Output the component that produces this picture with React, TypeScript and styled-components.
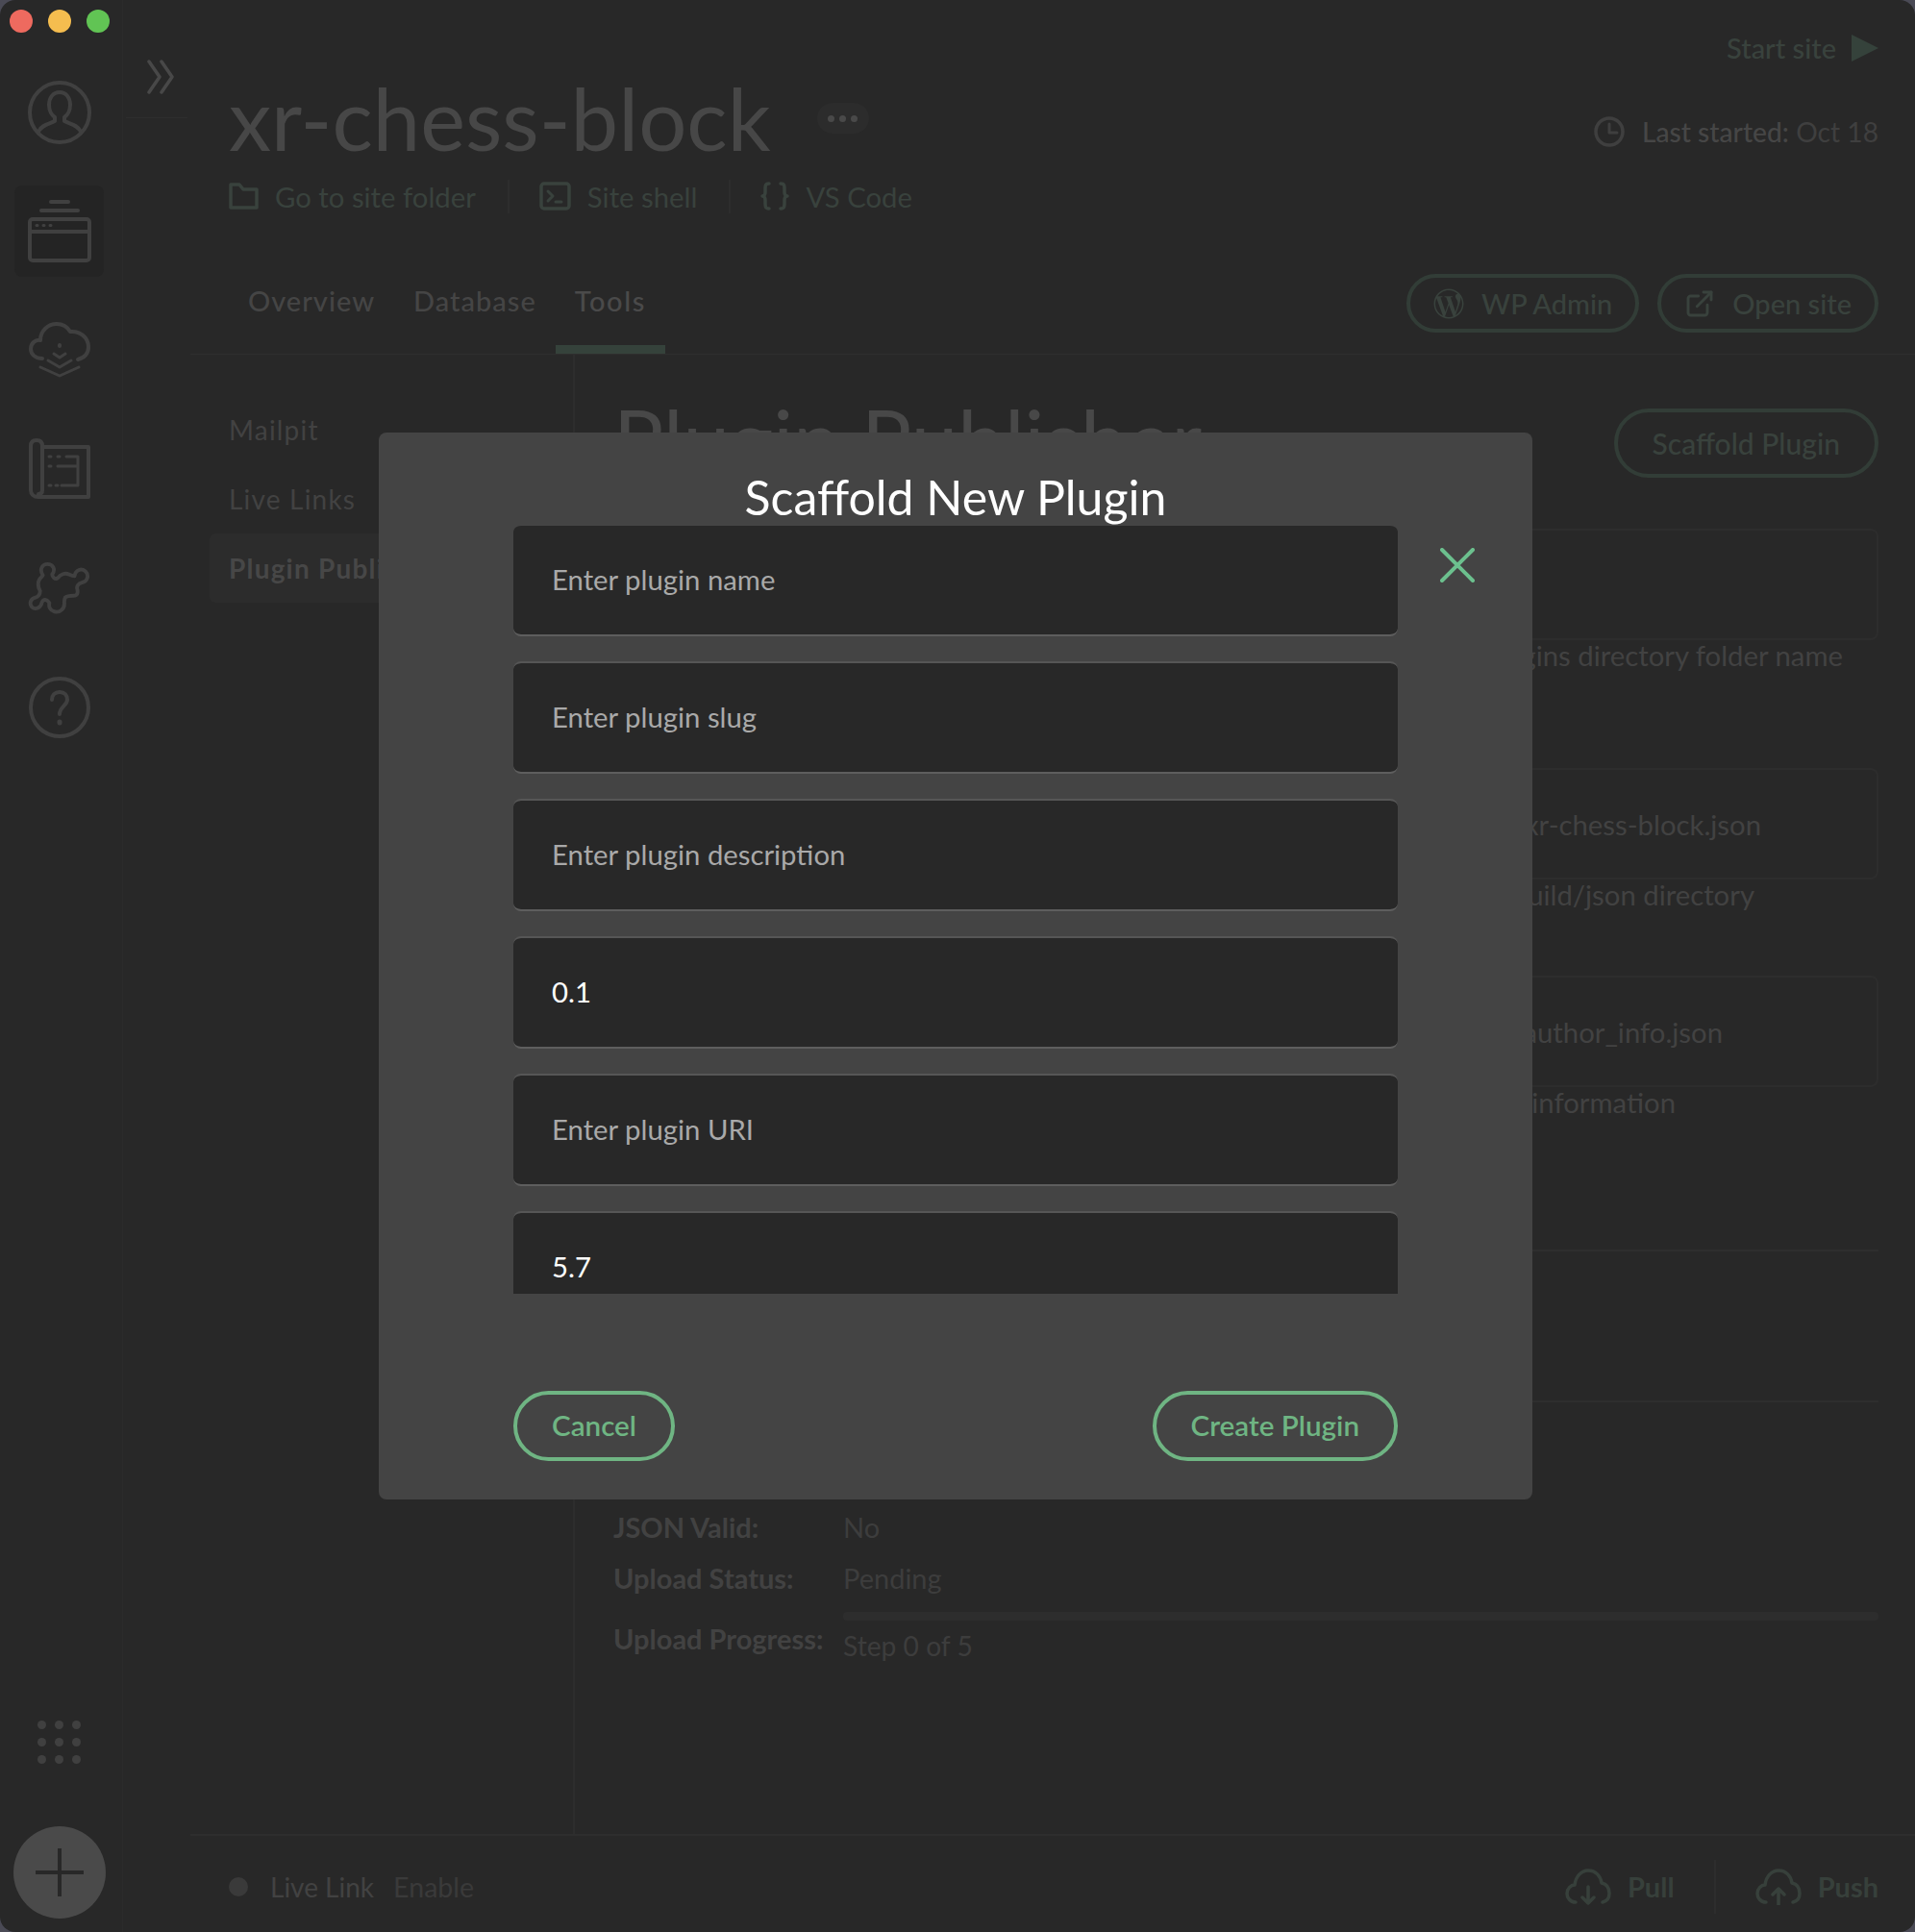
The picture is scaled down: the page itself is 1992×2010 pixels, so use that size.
import React from 'react';
import styled, { createGlobalStyle } from 'styled-components';
import { FaWordpressSimple } from 'react-icons/fa';
import { ExternalLink } from 'lucide-react';

const GlobalStyle = createGlobalStyle`
	html, body {
		margin: 0;
		padding: 0;
		background: #4a4a55;
	}
	* {
		box-sizing: border-box;
	}
	body {
		font-family: 'Lato', 'Open Sans', sans-serif;
	}
`;

const Window = styled.div`
	position: relative;
	display: flex;
	width: 1992px;
	height: 2010px;
	overflow: hidden;
	border-radius: 16px;
	background: #282828;
`;

const Sidebar = styled.nav`
	display: flex;
	flex-direction: column;
	align-items: center;
	width: 128px;
	padding: 10px 4px 0 0;
	border-right: 1px solid #2b2b2b;
`;

const TrafficLights = styled.div`
	display: flex;
	align-self: flex-start;
	gap: 16px;
	padding-left: 10px;
	margin-bottom: 35px;
`;

const Light = styled.span<{ $color: string }>`
	width: 24px;
	height: 24px;
	border-radius: 50%;
	background: ${(p) => p.$color};
`;

const SideIcon = styled.div<{ $active?: boolean }>`
	display: flex;
	align-items: center;
	justify-content: center;
	width: 93px;
	height: 95px;
	margin-bottom: ${(p) => (p.$active ? '28px' : '29px')};
	border-radius: 8px;
	background: ${(p) => (p.$active ? '#242424' : 'transparent')};
	color: #404040;
`;

const SideSpacer = styled.div`
	flex: 1;
`;

const DotGrid = styled.div`
	display: grid;
	grid-template-columns: repeat(3, 9px);
	gap: 9px;
	margin-bottom: 65px;
`;

const Dot = styled.span`
	width: 9px;
	height: 9px;
	border-radius: 50%;
	background: #404040;
`;

const AddButton = styled.div`
	display: flex;
	align-items: center;
	justify-content: center;
	width: 96px;
	height: 96px;
	margin-bottom: 14px;
	border-radius: 50%;
	background: #4a4a4a;
	color: #282828;
`;

const CollapseRail = styled.div`
	display: flex;
	flex-direction: column;
	align-items: center;
	width: 70px;
	padding-top: 62px;
	color: #484848;
`;

const Chevrons = styled.div`
	display: flex;
	margin-left: 8px;
`;

const RailRule = styled.div`
	width: 64px;
	height: 1px;
	margin-top: 24px;
	background: #2e2e2e;
`;

const SiteColumn = styled.div`
	display: flex;
	flex: 1;
	flex-direction: column;
	min-width: 0;
`;

const Header = styled.header`
	height: 369px;
	padding: 32px 38px 0 40px;
	border-bottom: 1px solid #2e2e2e;
`;

const HeaderTop = styled.div`
	display: flex;
	justify-content: space-between;
	height: 253px;
`;

const TitleBlock = styled.div`
	display: flex;
	flex-direction: column;
`;

const TitleRow = styled.div`
	display: flex;
	align-items: center;
	gap: 48px;
	height: 118px;
	margin-top: 32px;
`;

const SiteTitle = styled.h1`
	margin: 0;
	font-size: 88.6px;
	font-weight: 400;
	line-height: 1;
	color: #474747;
`;

const MorePill = styled.div`
	display: flex;
	align-items: center;
	justify-content: center;
	gap: 5px;
	width: 54px;
	height: 32px;
	border-radius: 16px;
	background: #2c2c2c;
`;

const MoreDot = styled.span`
	width: 7px;
	height: 7px;
	border-radius: 50%;
	background: #494949;
`;

const ActionRow = styled.div`
	display: flex;
	align-items: center;
	height: 40px;
	margin-top: 2px;
`;

const ActionLink = styled.a`
	display: flex;
	align-items: center;
	gap: 17px;
	padding-right: 33px;
	margin-right: 31px;
	border-right: 2px solid #2d2d2d;
	font-size: 29.3px;
	color: #39423d;

	&:last-child {
		border-right: 0;
	}
`;

const StatusBlock = styled.div`
	display: flex;
	flex-direction: column;
	align-items: flex-end;
	gap: 53px;
`;

const StartSite = styled.div`
	display: flex;
	align-items: center;
	gap: 16px;
	font-size: 29px;
	font-weight: 500;
	color: #39423d;
`;

const LastStarted = styled.div`
	display: flex;
	align-items: center;
	gap: 18px;
	font-size: 28.2px;
	color: #3f3f3f;

	b {
		font-weight: 500;
		color: #464646;
	}
`;

const TabsRow = styled.div`
	display: flex;
	align-items: flex-start;
	justify-content: space-between;
`;

const Tabs = styled.div`
	display: flex;
`;

const Tab = styled.div<{ $active?: boolean }>`
	height: 83px;
	padding: 10px 20px 0;
	border-bottom: 9px solid ${(p) => (p.$active ? '#35423b' : 'transparent')};
	font-size: 29px;
	font-weight: 500;
	letter-spacing: ${(p) => (p.$active ? '1.6px' : '1px')};
	color: ${(p) => (p.$active ? '#4a4a4a' : '#454545')};
`;

const PillRow = styled.div`
	display: flex;
	gap: 19px;
`;

const PillButton = styled.div<{ $tall?: boolean }>`
	display: flex;
	align-items: center;
	justify-content: center;
	gap: 18px;
	height: ${(p) => (p.$tall ? '72px' : '61px')};
	padding: 0 ${(p) => (p.$tall ? '36px' : '24px')};
	border: 4px solid #323d37;
	border-radius: 40px;
	font-size: ${(p) => (p.$tall ? '30px' : '29px')};
	font-weight: 500;
	color: #39423d;
`;

const Content = styled.div`
	display: flex;
	flex: 1;
	min-height: 0;
`;

const SubNav = styled.div`
	display: flex;
	flex-direction: column;
	width: 400px;
	padding: 42px 0 0 20px;
	border-right: 2px solid #2d2d2d;
`;

const SubNavItem = styled.div<{ $active?: boolean }>`
	height: 72px;
	padding: 19px 0 0 20px;
	border-radius: 6px;
	background: ${(p) => (p.$active ? '#2c2c2c' : 'transparent')};
	font-size: 28px;
	font-weight: ${(p) => (p.$active ? 700 : 400)};
	letter-spacing: 1.2px;
	color: ${(p) => (p.$active ? '#474747' : '#424242')};
`;

const MainPane = styled.main`
	flex: 1;
	min-width: 0;
	padding: 56px 38px 0 40px;
`;

const PaneTop = styled.div`
	display: flex;
	align-items: flex-start;
	justify-content: space-between;
	height: 125px;
`;

const PaneTitle = styled.h2`
	margin: -12px 0 0;
	font-size: 87px;
	font-weight: 400;
	line-height: 1;
	color: #484848;
`;

const FieldBox = styled.div<{ $after: number }>`
	display: flex;
	align-items: center;
	justify-content: flex-end;
	height: 116px;
	padding-right: ${(p) => p.$after}px;
	border: 2px solid #2d2d2d;
	border-radius: 8px;
	font-size: 29.3px;
	color: #424242;
`;

const FieldHelp = styled.div<{ $pad: number; $bottom: number }>`
	margin-bottom: ${(p) => p.$bottom}px;
	padding-right: ${(p) => p.$pad}px;
	font-size: 29.3px;
	line-height: 32px;
	color: #424242;
	text-align: right;
`;

const Rule = styled.div<{ $top: number }>`
	height: 2px;
	margin-top: ${(p) => p.$top}px;
	background: #2e2e2e;
`;

const StatusTable = styled.div`
	display: grid;
	grid-template-columns: 239px 1fr;
	margin-top: 112px;
	font-size: 29px;
	line-height: 35px;
	color: #3d3d3d;
`;

const StatusLabel = styled.div<{ $top?: number }>`
	height: ${(p) => (p.$top ? 60 : 53)}px;
	padding-top: ${(p) => p.$top ?? 0}px;
	font-weight: 700;
	color: #424242;
`;

const ProgressTrack = styled.div`
	height: 9px;
	margin-bottom: 9px;
	border-radius: 4px;
	background: #2d2d2d;
`;

const StepText = styled.div`
	font-size: 28.2px;
`;

const Footer = styled.footer`
	display: flex;
	align-items: center;
	justify-content: space-between;
	height: 102px;
	padding: 5px 38px 0 40px;
	border-top: 2px solid #2e2e2e;
	font-size: 28px;
`;

const LiveLink = styled.div`
	display: flex;
	align-items: center;
	color: #424242;
`;

const LiveDot = styled.span`
	width: 20px;
	height: 20px;
	margin-right: 23px;
	border-radius: 50%;
	background: #3a3a3a;
`;

const EnableText = styled.span`
	margin-left: 20px;
	font-size: 28.6px;
	color: #3a3a3a;
`;

const SyncRow = styled.div`
	display: flex;
	align-items: center;
`;

const SyncLink = styled.div`
	display: flex;
	align-items: center;
	gap: 17px;
	font-size: 29px;
	font-weight: 700;
	color: #37403b;
`;

const SyncSep = styled.div`
	width: 2px;
	height: 56px;
	margin: 0 41px;
	background: #2d2d2d;
`;

const Overlay = styled.div`
	position: absolute;
	inset: 0;
	display: flex;
	align-items: center;
	justify-content: center;
	padding-right: 4px;
`;

const Modal = styled.div`
	position: relative;
	display: flex;
	flex-direction: column;
	align-items: center;
	width: 1200px;
	height: 1110px;
	padding-top: 37px;
	border-radius: 8px;
	background: #444444;
`;

const ModalTitle = styled.h3`
	width: 100%;
	margin: 0 0 -3px;
	font-size: 50px;
	font-weight: 400;
	line-height: 61px;
	text-align: center;
	color: #ffffff;
`;

const CloseButton = styled.button`
	position: absolute;
	top: 120px;
	right: 60px;
	display: flex;
	width: 36px;
	height: 36px;
	padding: 0;
	border: 0;
	background: none;
	color: #6cc08e;
`;

const FormScroll = styled.div`
	display: flex;
	flex-direction: column;
	gap: 26px;
	width: 920px;
	height: 801px;
	overflow: hidden;
`;

const TextField = styled.input`
	flex: none;
	width: 100%;
	height: 117px;
	padding: 0 40px 3px;
	border: 0;
	border-top: 2px solid #565656;
	border-bottom: 2px solid #5e5e5e;
	border-radius: 8px;
	outline: none;
	background: #282828;
	background-clip: padding-box;
	font-family: inherit;
	font-size: 29.3px;
	color: #ffffff;

	&:first-child {
		border-top-color: transparent;
	}

	&::placeholder {
		color: #a9a9a9;
		opacity: 1;
	}
`;

const ModalActions = styled.div`
	display: flex;
	justify-content: space-between;
	width: 920px;
	margin-top: 101px;
`;

const ModalButton = styled.button`
	height: 73px;
	padding: 0 36px 2px;
	border: 4px solid #6fb583;
	border-radius: 37px;
	background: transparent;
	font-family: inherit;
	font-size: 29.6px;
	font-weight: 600;
	color: #6fb583;
`;

const stroke = { fill: 'none', stroke: 'currentColor', strokeWidth: 4, strokeLinecap: 'round', strokeLinejoin: 'round' } as const;

const AvatarIcon = () => (
	<svg width="66" height="66" viewBox="0 0 66 66" {...stroke}>
		<circle cx="33" cy="33" r="31" />
		<path d="M33 12c-7 0-11 6-11 13 0 6 3 11 6 13v4c-6 3-14 4-17 11M33 12c7 0 11 6 11 13 0 6-3 11-6 13v4c6 3 14 4 17 11" />
	</svg>
);

const SitesIcon = () => (
	<svg width="66" height="66" viewBox="0 0 66 66" {...stroke}>
		<path d="M24 2h18M14 11h38" />
		<rect x="2" y="20" width="62" height="43" rx="3" />
		<path d="M2 33h62" />
		<path d="M9 26.5h1M16 26.5h1M23 26.5h1" strokeWidth="3" />
	</svg>
);

const CloudSyncIcon = () => (
	<svg width="64" height="58" viewBox="0 0 64 58" {...stroke}>
		<path d="M14 38C6 38 2 33 2 28c0-6 5-10 10-9 0-10 8-17 17-17 6 0 11 3 14 8 10-1 19 6 19 16 0 7-4 11-11 13" />
		<path d="M32 24v1" />
		<path d="M26 33l6 4 6-4M20 40l12 7 12-7M12 47l20 9 20-9" strokeWidth="3" />
	</svg>
);

const BlueprintIcon = () => (
	<svg width="64" height="64" viewBox="0 0 64 64" {...stroke}>
		<path d="M14 9h48v52H10C5 61 2 58 2 54V8c0-4 2-6 6-6s6 2 6 6v46c0 3-2 4-4 4" />
		<path d="M21 19h2M30 19h2M39 19h12v30H34M21 29h2M30 29h21M21 49h2M28 49h2" strokeWidth="3" />
	</svg>
);

const PuzzleIcon = () => (
	<svg width="66" height="58" viewBox="-2 -2 68 60" {...stroke}>
		<path d="M14 14C10 8 13 2 19 2C25 2 28 8 24 13C24 16 27 19 30 17C33 13 38 11 42 13C44 14 46 15 48 15C49 8 56 6 60 10C64 14 62 21 56 22C52 23 50 26 51 29C52 33 51 36 47 36C43 36 40 36 38 38C37 40 37 41 37 43C38 50 32 55 26 53C22 52 20 48 21 44C19 40 15 39 13 43C12 49 6 52 2 48C-1 44 1 39 6 38C9 37 11 35 11 31C9 27 8 23 10 19C11 17 13 16 14 14Z" />
	</svg>
);

const HelpIcon = () => (
	<svg width="64" height="64" viewBox="0 0 64 64" {...stroke}>
		<circle cx="32" cy="32" r="30" />
		<path d="M24 24c0-5 3-8 8-8s8 3 8 8c0 6-8 7-8 15" />
		<path d="M32 47v1" strokeWidth="5" />
	</svg>
);

const ChevronsIcon = () => (
	<svg width="30" height="36" viewBox="0 0 30 36" {...stroke}>
		<path d="M3 2l11 16L3 34M16 2l11 16-11 16" strokeWidth="3.5" />
	</svg>
);

const FolderIcon = () => (
	<svg width="31" height="30" viewBox="0 0 31 30" {...stroke}>
		<path d="M2 3h9l4 5h14v19H2z" strokeWidth="3.5" />
	</svg>
);

const TerminalIcon = () => (
	<svg width="33" height="32" viewBox="0 0 33 32" {...stroke}>
		<rect x="2" y="3" width="29" height="26" rx="3" strokeWidth="3.5" />
		<path d="M9 11l5 5-5 5M17 22h6" strokeWidth="3" />
	</svg>
);

const BracesIcon = () => (
	<svg width="30" height="32" viewBox="0 0 30 32" {...stroke}>
		<path d="M9 3C5 3 5 5 5 9v3c0 2-1 4-3 4 2 0 3 2 3 4v3c0 4 0 6 4 6M21 3c4 0 4 2 4 6v3c0 2 1 4 3 4-2 0-3 2-3 4v3c0 4 0 6-4 6" strokeWidth="3.5" />
	</svg>
);

const ClockIcon = () => (
	<svg width="32" height="32" viewBox="0 0 32 32" {...stroke}>
		<circle cx="16" cy="16" r="14" strokeWidth="3.5" />
		<path d="M16 8v9h8" strokeWidth="3" />
	</svg>
);

const PlayIcon = () => (
	<svg width="28" height="28" viewBox="0 0 28 28">
		<path d="M0 0l28 14L0 28z" fill="#35423b" />
	</svg>
);

const CloudArrowIcon = ({ up }: { up?: boolean }) => (
	<svg width="48" height="38" viewBox="0 0 48 38" {...stroke}>
		<path d="M11 35C5 35 2 30 2 26c0-5 4-9 8-9C11 8 17 2 24 2c8 0 13 6 14 13 5 1 8 5 8 11 0 5-3 8-7 9" strokeWidth="3.5" />
		{up ? <path d="M24 38V21M18 27l6-6 6 6" strokeWidth="3.5" /> : <path d="M24 19v17M18 30l6 6 6-6" strokeWidth="3.5" />}
	</svg>
);

const PlusIcon = () => (
	<svg width="50" height="50" viewBox="0 0 50 50">
		<path d="M25 0v50M0 25h50" stroke="currentColor" strokeWidth="4" />
	</svg>
);

const CloseIcon = () => (
	<svg width="36" height="36" viewBox="0 0 36 36">
		<path d="M2 2l32 32M34 2L2 34" stroke="currentColor" strokeWidth="4" strokeLinecap="round" />
	</svg>
);

const sideIcons = [AvatarIcon, SitesIcon, CloudSyncIcon, BlueprintIcon, PuzzleIcon, HelpIcon];

const fields = [
	{ placeholder: 'Enter plugin name' },
	{ placeholder: 'Enter plugin slug' },
	{ placeholder: 'Enter plugin description' },
	{ value: '0.1' },
	{ placeholder: 'Enter plugin URI' },
	{ value: '5.7' },
];

export default function App() {
	return (
		<>
			<GlobalStyle />
			<Window>
				<Sidebar>
					<TrafficLights>
						<Light $color="#ee6a5f" />
						<Light $color="#f5bd4f" />
						<Light $color="#61c454" />
					</TrafficLights>
					{sideIcons.map((Icon, i) => (
						<SideIcon key={i} $active={i === 1}>
							<Icon />
						</SideIcon>
					))}
					<SideSpacer />
					<DotGrid>
						{Array.from({ length: 9 }).map((_, i) => (
							<Dot key={i} />
						))}
					</DotGrid>
					<AddButton>
						<PlusIcon />
					</AddButton>
				</Sidebar>

				<CollapseRail>
					<Chevrons>
						<ChevronsIcon />
					</Chevrons>
					<RailRule />
				</CollapseRail>

				<SiteColumn>
					<Header>
						<HeaderTop>
							<TitleBlock>
								<TitleRow>
									<SiteTitle>xr-chess-block</SiteTitle>
									<MorePill>
										<MoreDot />
										<MoreDot />
										<MoreDot />
									</MorePill>
								</TitleRow>
								<ActionRow>
									<ActionLink>
										<FolderIcon />
										Go to site folder
									</ActionLink>
									<ActionLink>
										<TerminalIcon />
										Site shell
									</ActionLink>
									<ActionLink>
										<BracesIcon />
										VS Code
									</ActionLink>
								</ActionRow>
							</TitleBlock>
							<StatusBlock>
								<StartSite>
									Start site
									<PlayIcon />
								</StartSite>
								<LastStarted>
									<ClockIcon />
									<span>
										<b>Last started:</b> Oct 18
									</span>
								</LastStarted>
							</StatusBlock>
						</HeaderTop>
						<TabsRow>
							<Tabs>
								<Tab>Overview</Tab>
								<Tab>Database</Tab>
								<Tab $active>Tools</Tab>
							</Tabs>
							<PillRow>
								<PillButton>
									<FaWordpressSimple size={32} />
									WP Admin
								</PillButton>
								<PillButton>
									<ExternalLink size={32} strokeWidth={2.2} />
									Open site
								</PillButton>
							</PillRow>
						</TabsRow>
					</Header>

					<Content>
						<SubNav>
							<SubNavItem>Mailpit</SubNavItem>
							<SubNavItem>Live Links</SubNavItem>
							<SubNavItem $active>Plugin Publisher</SubNavItem>
						</SubNav>
						<MainPane>
							<PaneTop>
								<PaneTitle>Plugin Publisher</PaneTitle>
								<PillButton $tall>Scaffold Plugin</PillButton>
							</PaneTop>
							<FieldBox $after={0} />
							<FieldHelp $pad={37} $bottom={101}>
								Plugins directory folder name
							</FieldHelp>
							<FieldBox $after={120}>xr-chess-block.json</FieldBox>
							<FieldHelp $pad={129} $bottom={68}>
								build/json directory
							</FieldHelp>
							<FieldBox $after={160}>author_info.json</FieldBox>
							<FieldHelp $pad={211} $bottom={0}>
								author information
							</FieldHelp>
							<Rule $top={137} />
							<Rule $top={155} />
							<StatusTable>
								<StatusLabel>JSON Valid:</StatusLabel>
								<div>No</div>
								<StatusLabel>Upload Status:</StatusLabel>
								<div>Pending</div>
								<StatusLabel $top={10}>Upload Progress:</StatusLabel>
								<div>
									<ProgressTrack />
									<StepText>Step 0 of 5</StepText>
								</div>
							</StatusTable>
						</MainPane>
					</Content>

					<Footer>
						<LiveLink>
							<LiveDot />
							Live Link
							<EnableText>Enable</EnableText>
						</LiveLink>
						<SyncRow>
							<SyncLink>
								<CloudArrowIcon />
								Pull
							</SyncLink>
							<SyncSep />
							<SyncLink>
								<CloudArrowIcon up />
								Push
							</SyncLink>
						</SyncRow>
					</Footer>
				</SiteColumn>

				<Overlay>
					<Modal>
						<ModalTitle>Scaffold New Plugin</ModalTitle>
						<CloseButton aria-label="Close">
							<CloseIcon />
						</CloseButton>
						<FormScroll>
							{fields.map((f, i) => (
								<TextField key={i} placeholder={f.placeholder} defaultValue={f.value} />
							))}
						</FormScroll>
						<ModalActions>
							<ModalButton>Cancel</ModalButton>
							<ModalButton>Create Plugin</ModalButton>
						</ModalActions>
					</Modal>
				</Overlay>
			</Window>
		</>
	);
}
